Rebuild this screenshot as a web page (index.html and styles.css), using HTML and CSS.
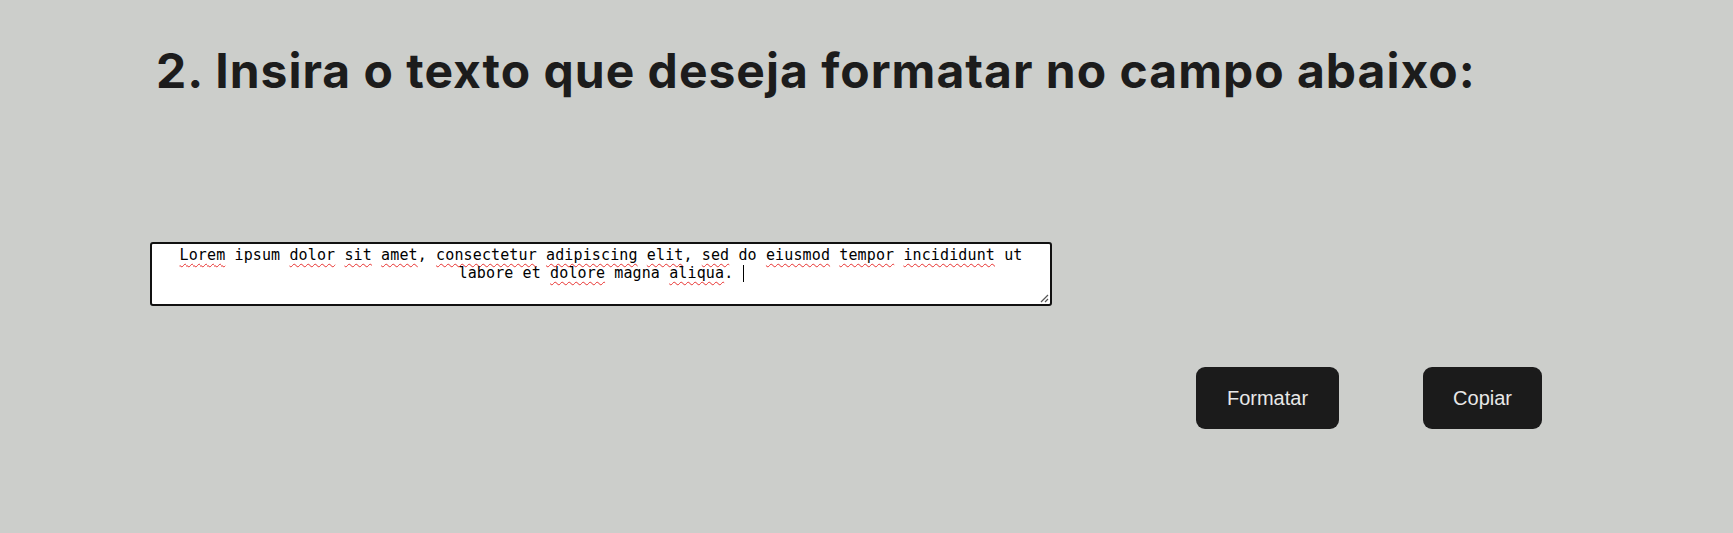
FILE: index.html
```html
<!DOCTYPE html>
<html lang="pt-BR">
<head>
<meta charset="utf-8">
<title>Formatador</title>
<link rel="stylesheet" href="styles.css">
</head>
<body>
<main class="page">
  <h1 class="title">2. Insira o texto que deseja formatar no campo abaixo:</h1>
  <div class="field" role="textbox" aria-multiline="true">
    <p class="field-text"><span class="sp">Lorem</span> ipsum <span class="sp">dolor</span> <span class="sp">sit</span> <span class="sp">amet</span>, <span class="sp">consectetur</span> <span class="sp">adipiscing</span> <span class="sp">elit</span>, <span class="sp">sed</span> do <span class="sp">eiusmod</span> <span class="sp">tempor</span> <span class="sp">incididunt</span> ut labore et <span class="sp">dolore</span> magna <span class="sp">aliqua</span>. <span class="caret"></span></p>
    <svg class="grip" width="10" height="10" viewBox="0 0 10 10"><path d="M9 2 L2 9 M9 6 L6 9" stroke="#555" stroke-width="1.2" fill="none"/></svg>
  </div>
  <div class="actions">
    <button class="btn" type="button">Formatar</button>
    <button class="btn" type="button">Copiar</button>
  </div>
</main>
</body>
</html>
```
FILE: styles.css
```css
html, body {
  margin: 0;
  padding: 0;
  background: #cccecb;
}
.page {
  padding: 36px 191px 0 150px;
}
.title {
  margin: 0 0 0 6px;
  font-family: Inter, "Liberation Sans", sans-serif;
  font-weight: 700;
  font-size: 48px;
  line-height: 70px;
  color: #1c1c1c;
  letter-spacing: 1px;
}
.field {
  position: relative;
  margin-top: 136px;
  width: 898px;
  height: 60px;
  background: #fff;
  border: 2px solid #111;
  border-radius: 3px;
  box-sizing: content-box;
}
.field-text {
  margin: 0;
  padding: 2px 4px;
  font-family: "DejaVu Sans Mono", "Liberation Mono", monospace;
  font-size: 15px;
  line-height: 18px;
  letter-spacing: 0.13px;
  color: #000;
  text-align: center;
}
.sp {
  text-decoration: underline wavy #e8312f;
  text-decoration-thickness: 1.4px;
  text-underline-offset: 3px;
  text-decoration-skip-ink: none;
}
.caret {
  display: inline-block;
  width: 1px;
  height: 17px;
  background: #000;
  vertical-align: -4px;
}
.grip {
  position: absolute;
  right: 1px;
  bottom: 1px;
}
.actions {
  display: flex;
  justify-content: flex-end;
  gap: 84px;
  margin-top: 61px;
}
.btn {
  font-family: "Liberation Sans", Arial, sans-serif;
  font-size: 20px;
  line-height: 24px;
  color: #e8e8e8;
  background: #1b1b1b;
  border: none;
  border-radius: 9px;
  padding: 19px 30px;
  cursor: pointer;
}
.btn:first-child {
  padding: 19px 31px;
}
```
